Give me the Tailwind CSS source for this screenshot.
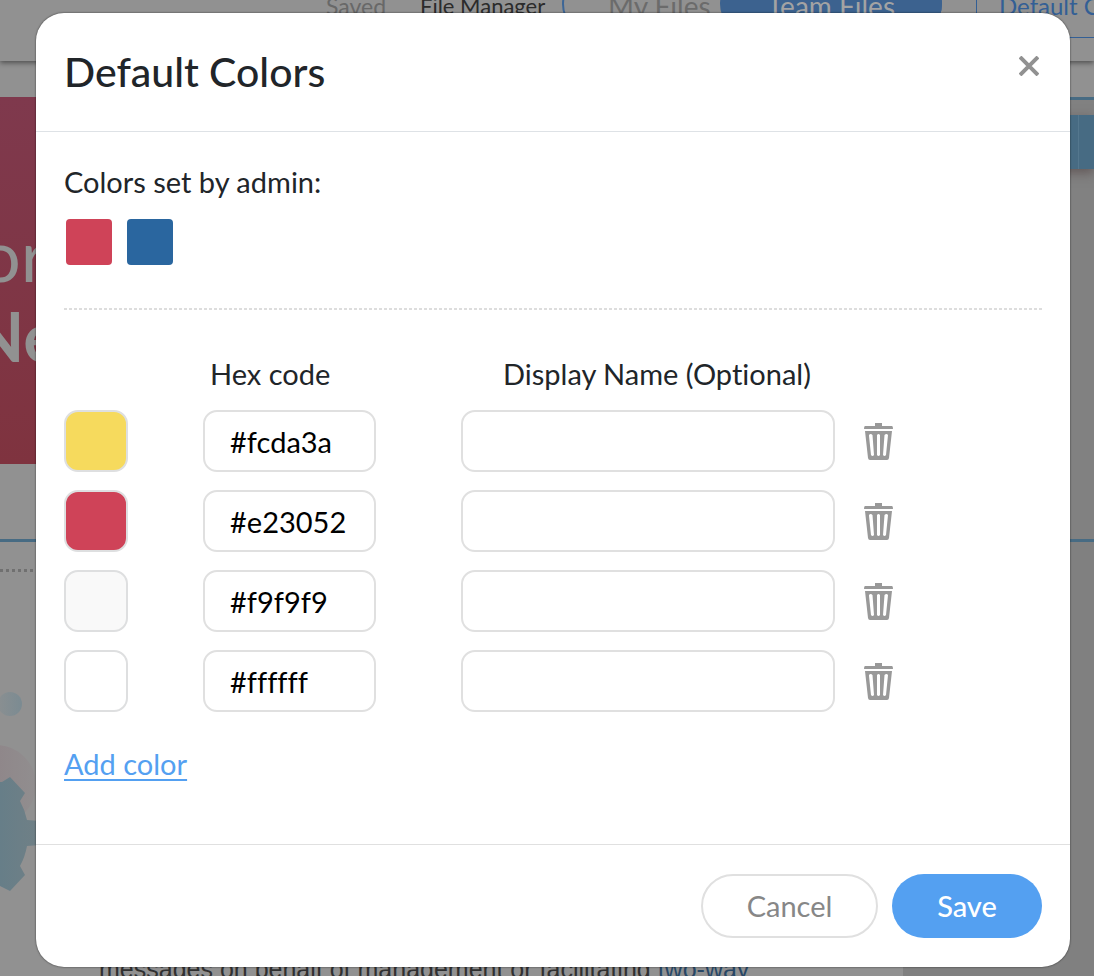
<!DOCTYPE html>
<html lang="en">
<head>
  <meta charset="UTF-8" />
  <meta name="viewport" content="width=device-width, initial-scale=1" />
  <title>Default Colors</title>
  <script src="https://cdn.jsdelivr.net/npm/@tailwindcss/browser@4"></script>
</head>
<body class="relative h-screen overflow-hidden bg-[#919191] font-[Lato,sans-serif] text-[#212529]">

  <!-- Editor page behind the dialog -->
  <div class="flex h-full flex-col overflow-hidden" aria-hidden="true">
    <header class="relative z-10 flex h-[61px] shrink-0 items-start bg-[#919191] pl-[326px] whitespace-nowrap shadow-[0_2px_5px_rgba(0,0,0,0.45)]">
      <span class="-mt-[10px] w-[94px] shrink-0 text-[23px] leading-8 text-[#686868]">Saved</span>
      <span class="-mt-[10px] w-[142px] shrink-0 text-[22px] leading-8 text-[#2b2b2b]">File Manager</span>
      <div class="-mt-7 flex h-[64px] w-[380px] shrink-0 rounded-full border-2 border-[#3d6696] text-[28px]">
        <span class="w-[156px] shrink-0 pt-[11px] pl-11 text-[#6b6b6b]">My Files</span>
        <span class="w-[222px] shrink-0 rounded-full bg-[#3c628f] pt-[11px] text-center text-[#a3a3a3]">Team Files</span>
      </div>
      <div class="-mt-10 ml-[34px] h-[78px] w-[240px] shrink-0 border border-[#335f95] pt-[29px] pl-[22px] text-2xl text-[#335f95]">Default Colors</div>
    </header>

    <main class="flex grow flex-col pt-9">
      <section class="flex h-[445px] shrink-0 border-y-3 border-[#476b83]">
        <div class="-mt-[3px] flex w-[903px] shrink-0 flex-col bg-[#919191]">
          <div class="h-[367px] overflow-hidden bg-linear-to-b from-[#7f394d] to-[#7f333f] pt-[107px] text-[#919191]">
            <p class="-ml-5 text-[72px] leading-[100px]">or</p>
            <p class="-mt-2 -ml-7 text-[68px] leading-[80px] font-bold">Ne</p>
          </div>
        </div>
        <div class="grow bg-[#818181]">
          <div class="mt-[15px] flex h-[54px] bg-[#476b83] shadow-[0_4px_10px_rgba(70,50,50,0.5)]">
            <div class="w-[176px] border-r border-[#54778e]"></div>
          </div>
        </div>
      </section>
      <section class="flex grow">
        <div class="flex w-[903px] shrink-0 flex-col bg-[#919191]">
          <div class="mt-[27px] border-t-3 border-dotted border-[#707070]"></div>
          <svg class="mt-[110px] h-[220px] w-[80px]" viewBox="0 681 80 220">
            <defs>
              <linearGradient id="dot" x1="0" x2="1"><stop stop-color="#8a8f91" /><stop offset="1" stop-color="#7b8b92" /></linearGradient>
              <linearGradient id="halo" x1="0" x2="1"><stop stop-color="#8d7f84" /><stop offset="1" stop-color="#918e8f" /></linearGradient>
              <linearGradient id="gear" x1="0" x2="1"><stop stop-color="#627d89" /><stop offset="1" stop-color="#708086" /></linearGradient>
            </defs>
            <circle cx="10" cy="703" r="12" fill="url(#dot)" />
            <circle cx="-4" cy="784" r="40" fill="url(#halo)" />
            <path d="M-20 781H2L10 776L25 792L20 800Q25 809 27 819L40 820V844L27 845Q25 856 20 865L25 874L10 890L0 885H-20Z" fill="url(#gear)" />
          </svg>
          <p class="mt-[51px] ml-[99px] font-['Liberation_Sans',sans-serif] text-[25px] leading-8 whitespace-nowrap text-[#303030]">messages on behalf of management or facilitating <span class="text-[#274766]">two-way</span></p>
        </div>
        <div class="grow bg-[#808080]"></div>
      </section>
    </main>
  </div>

  <!-- Dialog -->
  <div class="absolute inset-x-0 top-0 z-20 pt-[13px] pr-6 pl-9">
    <form role="dialog" aria-labelledby="dialogTitle" class="rounded-[28px] bg-white shadow-[0_0_2px_rgba(0,0,0,0.7)]">
      <div class="flex h-[119px] items-center justify-between border-b border-[#dee2e6] px-7">
        <h1 id="dialogTitle" class="text-[41px] leading-[48px] font-medium">Default Colors</h1>
        <button type="button" aria-label="Close" class="mb-3 p-[3px] text-[#919191]">
          <svg class="size-5" viewBox="0 0 20 20" fill="none" stroke="currentColor" stroke-width="4"><path d="M1 1L19 19M19 1L1 19" /></svg>
        </button>
      </div>

      <div class="px-7 pt-[30px] text-[29px] leading-10 [font-variant-ligatures:none]">
        <h2>Colors set by admin:</h2>
        <div class="flex gap-[15px] px-[2px] pt-[17px] pb-[43px]">
          <div class="size-[46px] rounded-[4px] bg-[#cf4358]"></div>
          <div class="size-[46px] rounded-[4px] bg-[#2a669f]"></div>
        </div>
        <div class="h-[2px] bg-[repeating-linear-gradient(90deg,#dddddd_0_3px,#ffffff_3px_5px)]"></div>

        <div class="mt-11 grid grid-cols-[139px_258px_403px_auto] items-center justify-start gap-y-[18px]">
          <div></div>
          <div class="-mb-[2px] pl-[7px]">Hex code</div>
          <div class="-mb-[2px] pl-[42px]">Display Name (Optional)</div>
          <div></div>

          <button type="button" aria-label="Pick color 1" class="h-[62px] w-16 rounded-[14px] border-2 border-[#dedfe0] bg-[#f6da5d]"></button>
          <input type="text" aria-label="Hex code 1" value="#fcda3a" class="h-[62px] w-[173px] rounded-[14px] border-2 border-[#e0e0e0] px-[25px] text-black" />
          <input type="text" aria-label="Display name 1" class="h-[62px] w-[374px] rounded-[14px] border-2 border-[#e0e0e0] px-[25px] text-black" />
          <button type="button" aria-label="Delete color 1" class="text-[#999999]">
            <svg class="h-[37px] w-[29px]" viewBox="0 0 29 37"><use href="#trash" /></svg>
          </button>

          <button type="button" aria-label="Pick color 2" class="h-[62px] w-16 rounded-[14px] border-2 border-[#dedfe0] bg-[#cf4358]"></button>
          <input type="text" aria-label="Hex code 2" value="#e23052" class="h-[62px] w-[173px] rounded-[14px] border-2 border-[#e0e0e0] px-[25px] text-black" />
          <input type="text" aria-label="Display name 2" class="h-[62px] w-[374px] rounded-[14px] border-2 border-[#e0e0e0] px-[25px] text-black" />
          <button type="button" aria-label="Delete color 2" class="text-[#999999]">
            <svg class="h-[37px] w-[29px]" viewBox="0 0 29 37"><use href="#trash" /></svg>
          </button>

          <button type="button" aria-label="Pick color 3" class="h-[62px] w-16 rounded-[14px] border-2 border-[#dedfe0] bg-[#f9f9f9]"></button>
          <input type="text" aria-label="Hex code 3" value="#f9f9f9" class="h-[62px] w-[173px] rounded-[14px] border-2 border-[#e0e0e0] px-[25px] text-black" />
          <input type="text" aria-label="Display name 3" class="h-[62px] w-[374px] rounded-[14px] border-2 border-[#e0e0e0] px-[25px] text-black" />
          <button type="button" aria-label="Delete color 3" class="text-[#999999]">
            <svg class="h-[37px] w-[29px]" viewBox="0 0 29 37"><use href="#trash" /></svg>
          </button>

          <button type="button" aria-label="Pick color 4" class="h-[62px] w-16 rounded-[14px] border-2 border-[#dedfe0] bg-white"></button>
          <input type="text" aria-label="Hex code 4" value="#ffffff" class="h-[62px] w-[173px] rounded-[14px] border-2 border-[#e0e0e0] px-[25px] text-black" />
          <input type="text" aria-label="Display name 4" class="h-[62px] w-[374px] rounded-[14px] border-2 border-[#e0e0e0] px-[25px] text-black" />
          <button type="button" aria-label="Delete color 4" class="text-[#999999]">
            <svg class="h-[37px] w-[29px]" viewBox="0 0 29 37"><use href="#trash" /></svg>
          </button>
        </div>

        <div class="pt-8 pb-[60px]">
          <a href="#" class="text-[#54a0f1] underline decoration-2 underline-offset-4">Add color</a>
        </div>
      </div>

      <div class="flex justify-end gap-[14px] border-t border-[#e0e0e0] px-7 py-[29px] text-[29px]">
        <button type="button" class="h-16 w-[177px] rounded-full border-2 border-[#e0e0e0] text-[#878787]">Cancel</button>
        <button type="submit" class="h-16 w-[150px] rounded-full bg-[#54a0f1] font-medium text-white">Save</button>
      </div>
    </form>
  </div>

  <svg class="hidden">
    <symbol id="trash" viewBox="0 0 29 37">
      <path fill="currentColor" d="M11 0h7v3h10q1 0 1 3H0q0-3 1-3h10z" />
      <path fill="currentColor" fill-rule="evenodd" d="M1 8H28L25 35Q24.700 37 23 37H6Q4.300 37 4 35ZM5 13L7 32Q8.500 34 10 32L8.500 12Q6.500 10 5 12ZM13 12V32Q14.500 34 16 32V12Q14.500 10 13 12ZM20.500 12L19 32Q20.500 34 22 32L24 12Q22.500 10 20.500 12Z" />
    </symbol>
  </svg>
</body>
</html>
